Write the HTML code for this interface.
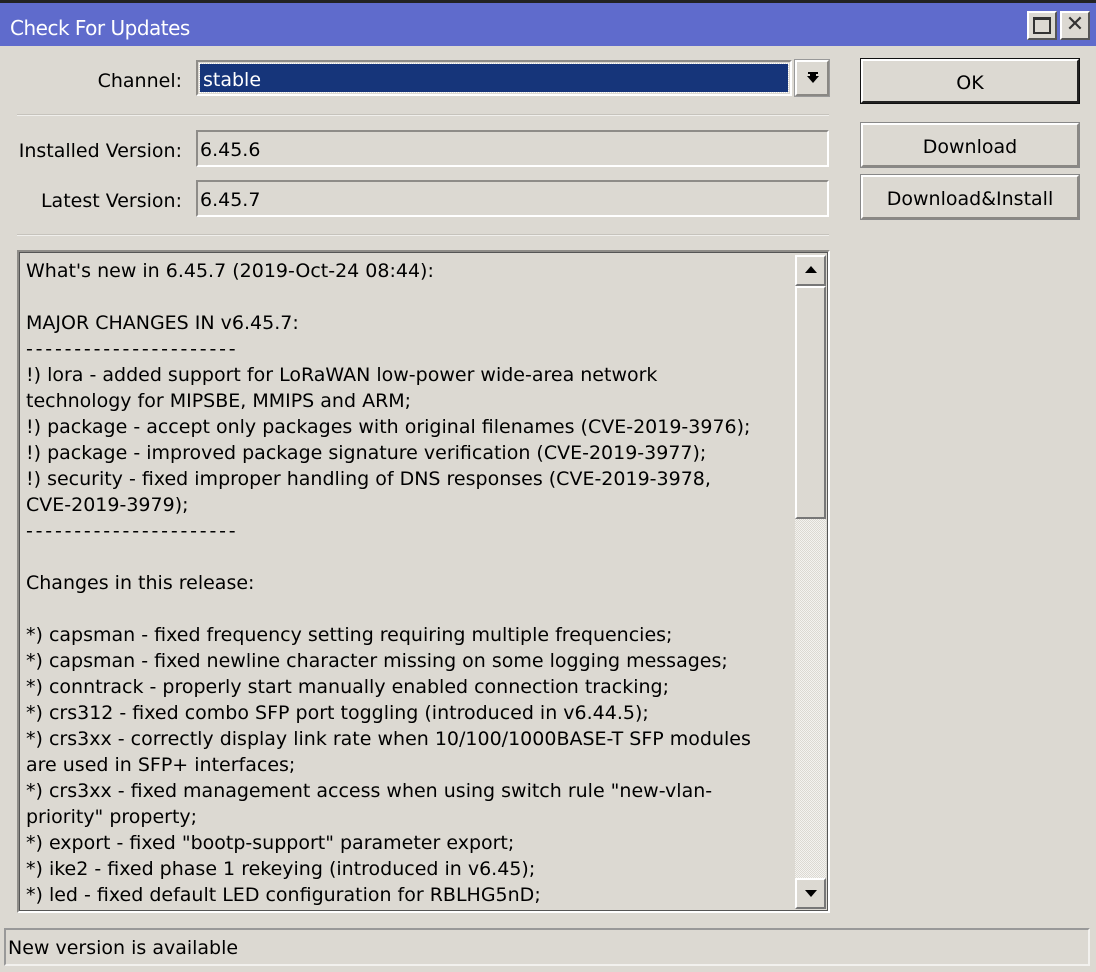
<!DOCTYPE html>
<html><head><meta charset="utf-8"><style>
*{margin:0;padding:0;box-sizing:border-box}
body{width:1096px;height:972px;background:#dcd9d2;font-family:"DejaVu Sans","Liberation Sans",sans-serif;font-size:19px;color:#000;position:relative;overflow:hidden}
.a{position:absolute}
.sunk{border:2px solid;border-color:#8e8c88 #fff #fff #8e8c88}
.btn{position:absolute;border:2px solid;border-color:#fff #8a8884 #8a8884 #fff;outline:1px solid #888;display:flex;align-items:center;justify-content:center;background:#dcd9d2;padding-top:3px}
.lbl{position:absolute;text-align:right;white-space:nowrap}
.sep{position:absolute;height:2px;border-top:1px solid #c6c3bc;border-bottom:1px solid #f0efec}
#txt{position:absolute;left:26px;top:258px;width:770px;line-height:26px;white-space:pre}
.d{letter-spacing:2.8px}
</style></head><body>
<div class="a" style="left:0;top:0;width:1096px;height:3px;background:#222"></div>
<div class="a" style="left:0;top:3px;width:1096px;height:43px;background:#5f6bcc"></div>
<div class="a" style="left:10px;top:16px;color:#fff;font-size:20px;letter-spacing:-0.5px">Check For Updates</div>
<div class="a" style="left:1027px;top:11px;width:30px;height:29px;background:#dcd9d2;border:2px solid;border-color:#fff #555 #555 #fff"><div class="a" style="left:4px;top:4px;width:18px;height:17px;border:2px solid #333;border-top-width:3px"></div></div>
<div class="a" style="left:1060px;top:11px;width:30px;height:29px;background:#dcd9d2;border:2px solid;border-color:#fff #555 #555 #fff;font-weight:bold;font-size:22px;line-height:24px;text-align:center;color:#333">✕</div>

<div class="lbl" style="right:914px;top:70px">Channel:</div>
<div class="a sunk" style="left:196px;top:60px;width:596px;height:36px;background:#dcd9d2;padding:2px"><div style="background:#16357a;color:#fff;height:100%;padding-left:3px;line-height:32px;outline:1px dotted #fff">stable</div></div>
<div class="a" style="left:795px;top:60px;width:34px;height:36px;border:2px solid;border-color:#fff #8a8884 #8a8884 #fff;outline:1px solid #999"><div class="a" style="left:11px;top:10px;width:10px;height:2px;background:#000"></div><div class="a" style="left:10px;top:14px;width:0;height:0;border-left:6px solid transparent;border-right:6px solid transparent;border-top:7px solid #000"></div><div class="a" style="left:13px;top:12px;width:6px;height:3px;background:#000"></div></div>
<div class="sep" style="left:17px;top:114px;width:812px"></div>
<div class="lbl" style="right:914px;top:140px">Installed Version:</div>
<div class="a sunk" style="left:196px;top:130px;width:633px;height:37px;padding-left:2px;line-height:36px">6.45.6</div>
<div class="lbl" style="right:914px;top:190px">Latest Version:</div>
<div class="a sunk" style="left:196px;top:180px;width:633px;height:37px;padding-left:2px;line-height:36px">6.45.7</div>
<div class="sep" style="left:17px;top:234px;width:812px"></div>

<div class="btn" style="left:861px;top:59px;width:218px;height:44px;border-color:#fff #222 #222 #fff;outline:1px solid #111">OK</div>
<div class="btn" style="left:861px;top:123px;width:218px;height:44px">Download</div>
<div class="btn" style="left:861px;top:175px;width:218px;height:44px">Download&amp;Install</div>

<div class="a" style="left:17px;top:250px;width:813px;height:663px;border:2px solid;border-color:#8e8c88 #fff #fff #8e8c88;outline:1px solid #555;outline-offset:-3px"></div>
<div id="txt">What's new in 6.45.7 (2019-Oct-24 08:44):

MAJOR CHANGES IN v6.45.7:
<span class="d">----------------------</span>
!) lora - added support for LoRaWAN low-power wide-area network
technology for MIPSBE, MMIPS and ARM;
!) package - accept only packages with original filenames (CVE-2019-3976);
!) package - improved package signature verification (CVE-2019-3977);
!) security - fixed improper handling of DNS responses (CVE-2019-3978,
CVE-2019-3979);
<span class="d">----------------------</span>

Changes in this release:

*) capsman - fixed frequency setting requiring multiple frequencies;
*) capsman - fixed newline character missing on some logging messages;
*) conntrack - properly start manually enabled connection tracking;
*) crs312 - fixed combo SFP port toggling (introduced in v6.44.5);
*) crs3xx - correctly display link rate when 10/100/1000BASE-T SFP modules
are used in SFP+ interfaces;
*) crs3xx - fixed management access when using switch rule "new-vlan-
priority" property;
*) export - fixed "bootp-support" parameter export;
*) ike2 - fixed phase 1 rekeying (introduced in v6.45);
*) led - fixed default LED configuration for RBLHG5nD;</div>
<div class="a" style="left:795px;top:255px;width:31px;height:654px;background:repeating-conic-gradient(#f4f3f0 0 25%,#dcd9d2 0 50%) 0 0/2px 2px"></div>
<div class="a" style="left:795px;top:255px;width:31px;height:31px;background:#dcd9d2;border:2px solid;border-color:#fff #777 #777 #fff"><div class="a" style="left:8px;top:9px;border-left:6px solid transparent;border-right:6px solid transparent;border-bottom:7px solid #000"></div></div>
<div class="a" style="left:795px;top:286px;width:31px;height:233px;background:#dcd9d2;border:2px solid;border-color:#fff #777 #777 #fff"></div>
<div class="a" style="left:795px;top:878px;width:31px;height:31px;background:#dcd9d2;border:2px solid;border-color:#fff #777 #777 #fff"><div class="a" style="left:8px;top:10px;border-left:6px solid transparent;border-right:6px solid transparent;border-top:7px solid #000"></div></div>

<div class="a" style="left:4px;top:928px;width:1086px;height:38px;border:2px solid;border-color:#999 #f2f1ee #f2f1ee #999;padding-left:2px;line-height:36px">New version is available</div>
</body></html>
